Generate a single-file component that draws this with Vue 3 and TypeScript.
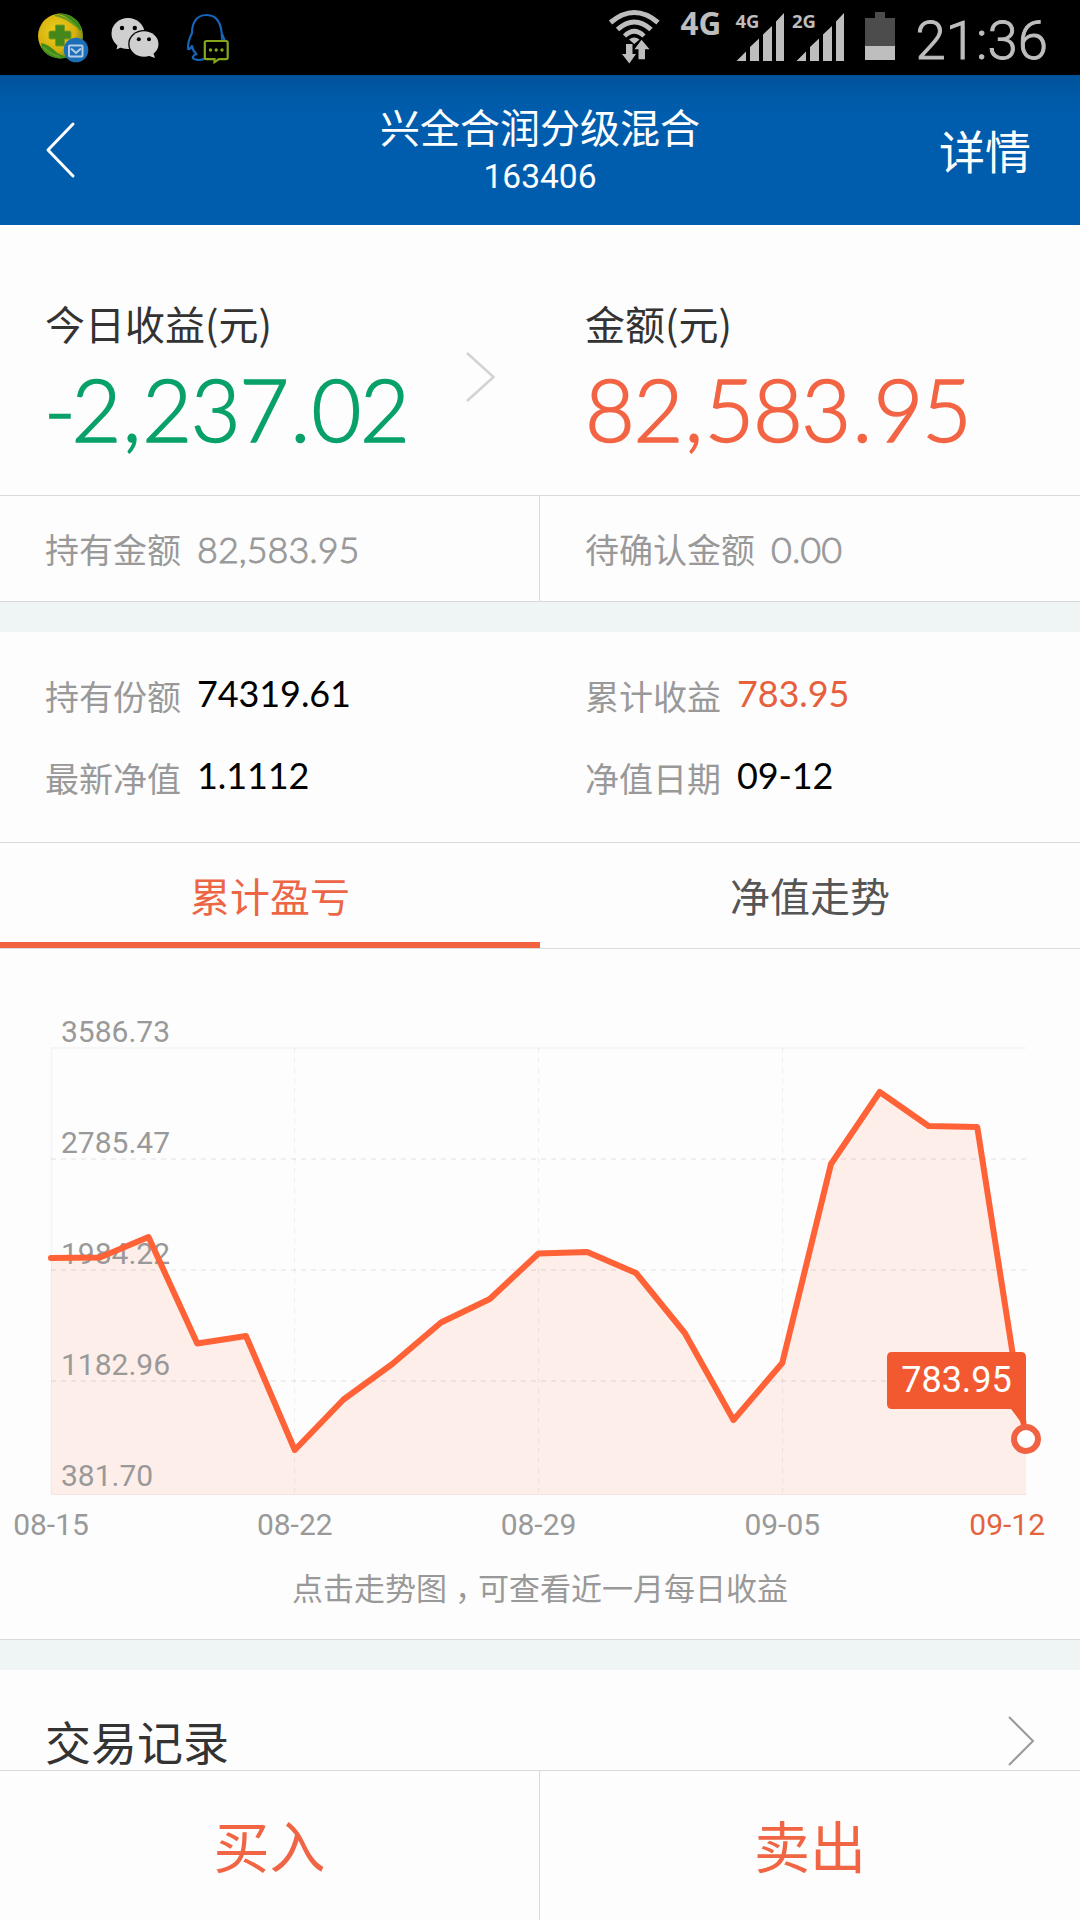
<script setup lang="ts">
interface Item {
  label: string
  value: string
  accent?: boolean
}

const holdings: Item[] = [
  { label: '持有份额', value: '74319.61' },
  { label: '累计收益', value: '783.95', accent: true },
  { label: '最新净值', value: '1.1112' },
  { label: '净值日期', value: '09-12' },
]

// Chart geometry, in chart viewBox units
const left = 51
const step = 48.75
const top = 48
const bottom = 495
const ys: number[] = [
  258, 257.5, 237, 343.5, 336, 450, 399.5, 364, 322.5, 299, 253.5, 252, 273,
  333, 420, 363, 164, 92, 126, 127, 439,
]
const points = ys.map((y, i) => `${left + i * step},${y}`).join(' ')
const area = `${left},${bottom} ${points} 1026,${bottom}`

const yLabels = ['3586.73', '2785.47', '1984.22', '1182.96', '381.70'].map(
  (text, i) => ({ text, y: top - 6 + i * 111 }),
)
const xLabels = [
  { text: '08-15', x: 51 },
  { text: '08-22', x: 294.75 },
  { text: '08-29', x: 538.5 },
  { text: '09-05', x: 782.25 },
]
</script>

<template>
  <div class="screen">
    <div class="status">
      <svg class="notices" width="240" height="75" viewBox="0 0 240 75">
        <defs>
          <radialGradient id="ball" cx="0.4" cy="0.4" r="0.65">
            <stop offset="0" stop-color="#ecd21c" />
            <stop offset="0.65" stop-color="#d8b00f" />
            <stop offset="1" stop-color="#6d8a16" />
          </radialGradient>
          <clipPath id="ballClip"><circle cx="60.5" cy="36" r="22.5" /></clipPath>
        </defs>
        <circle cx="60.5" cy="36" r="22.5" fill="url(#ball)" />
        <g clip-path="url(#ballClip)">
          <path d="M50 14Q62 12 71 21Q78 28 80 31L86 24L70 8Z" fill="#3d8c1a" />
          <path d="M41 43Q47 44 53 49Q60 57 72 57L64 62L44 58Z" fill="#3d8c1a" />
          <path d="M55 15Q66 17 76 26" fill="none" stroke="#5f9c24" stroke-width="2" />
          <path d="M43 47Q50 54 60 57" fill="none" stroke="#5f9c24" stroke-width="2" />
        </g>
        <path d="M56.500 25h7q1 0 1 1v5h5q1.500 0 1.500 1.500v5q0 1.500-1.500 1.500h-5v6q0 1-1 1h-7q-1 0-1-1v-6h-5q-1.500 0-1.500-1.500v-5q0-1.500 1.500-1.500h5v-5q0-1 1-1z" fill="#44881c" stroke="#7f9a1b" stroke-width="1" />
        <circle cx="76" cy="50" r="12.300" fill="#1b6fb8" />
        <rect x="69" y="45.500" width="13.500" height="11" rx="1" fill="none" stroke="#b4cde4" stroke-width="2" />
        <path d="M71 48.500l5 4.500l5-4.500" fill="none" stroke="#b4cde4" stroke-width="2" />

        <ellipse cx="128" cy="33.500" rx="16.500" ry="15.500" fill="#cfcfcf" />
        <path d="M118 43L116.500 49.500L124 46Z" fill="#cfcfcf" />
        <ellipse cx="144" cy="44" rx="15.800" ry="14" fill="#000" />
        <ellipse cx="144" cy="44" rx="14.500" ry="12.700" fill="#cfcfcf" />
        <path d="M148 55.500L155 58L152.500 51Z" fill="#cfcfcf" />
        <g fill="#000">
          <circle cx="122" cy="28" r="2.200" /><circle cx="134.800" cy="28" r="2.200" />
          <circle cx="138.800" cy="39.300" r="2" /><circle cx="149" cy="39.300" r="2" />
        </g>

        <path
          d="M222 39C222 25 218 15 206.500 15C195 15 192 25 192 33C190 37 187.500 43 188 49C190 50 191 47 192 46C192.500 49 194 52 196.500 54C193 55 190.500 59 196 59.500C199 60.500 202 60 205 58.500M222 34L224.500 40"
          fill="none"
          stroke="#1565b8"
          stroke-width="2.200"
          stroke-linecap="round"
          stroke-linejoin="round"
        />
        <path d="M206.500 41h19.500q1.700 0 1.700 1.700v14.800q0 1.700-1.700 1.700h-7l-4.500 3v-3h-8q-1.700 0-1.700-1.700V42.700q0-1.700 1.700-1.700z" fill="#000" stroke="#86a71c" stroke-width="2.200" />
        <g fill="#86a71c">
          <circle cx="210.500" cy="50" r="1.700" /><circle cx="216.200" cy="50" r="1.700" /><circle cx="222" cy="50" r="1.700" />
        </g>
      </svg>
      <svg class="system" width="480" height="75" viewBox="600 0 480 75">
        <g fill="none" stroke="#bebebe">
          <path d="M610.500 22.500Q634.300 2.500 658 22.500" stroke-width="5" />
          <path d="M617.500 29.500Q634.300 14.500 651 29.500" stroke-width="5" />
          <path d="M624.500 36Q634.300 26.500 644 36" stroke-width="4.500" />
        </g>
        <g fill="#bebebe">
          <path d="M629 39.500Q634.300 35.500 639.500 39.500L634.300 44Z" />
          <path d="M626 44h6.500v10h3.500l-6.700 9.500l-7.300-9.500h4z" />
          <path d="M638.500 59.300v-10h-4l7-9.600l8 9.600H645v10z" />
          <g v-for="dx in [0, 60]" :key="dx" :transform="`translate(${dx} 0)`">
            <path d="M736.500 61L746 51.500V61zM750 61V47l9-8.500V61zM763 61V34.500l9-8.500V61zM776 61V21.500l8-8.500V61z" />
          </g>
          <text class="net" x="680.500" y="34.800" font-size="31.500">4G</text>
          <text class="net" x="735.500" y="28.300" font-size="18.500">4G</text>
          <text class="net" x="792" y="28.300" font-size="18.500">2G</text>
        </g>
        <path d="M865 18h10v-6h10v6h10v28h-30z" fill="#4c4c4c" />
        <path d="M865 46h30v14h-30z" fill="#bebebe" />
        <text class="clock" x="915.500" y="59">21:36</text>
      </svg>
    </div>

    <header class="header">
      <svg class="back" width="34" height="60" viewBox="0 0 34 60">
        <path d="M28 4L3 30L28 56" fill="none" stroke="#fff" stroke-width="3" stroke-linecap="round" stroke-linejoin="round" />
      </svg>
      <div class="heading">
        <div class="title">兴全合润分级混合</div>
        <div class="code">163406</div>
      </div>
      <div class="detail">详情</div>
    </header>

    <section class="summary">
      <div class="figure">
        <div class="caption">今日收益(元)</div>
        <div class="big green"><span class="minus">-</span>2<span class="sep">,</span>237<span class="sep">.</span>02</div>
        <svg class="more" width="32" height="52" viewBox="0 0 32 52">
          <path d="M2 2L28.500 26L2 50" fill="none" stroke="#d2d3d6" stroke-width="2.600" />
        </svg>
      </div>
      <div class="figure">
        <div class="caption">金额(元)</div>
        <div class="big orange">82<span class="sep">,</span>583<span class="sep">.</span>95</div>
      </div>
    </section>

    <section class="split">
      <div class="cell"><span class="label">持有金额</span><span class="num thin">82,583.95</span></div>
      <div class="cell"><span class="label">待确认金额</span><span class="num thin">0.00</span></div>
    </section>
    <div class="band"></div>

    <section class="holdings">
      <div v-for="item in holdings" :key="item.label" class="holding">
        <span class="label">{{ item.label }}</span>
        <span class="num" :class="{ accent: item.accent }">{{ item.value }}</span>
      </div>
    </section>

    <nav class="tabs">
      <div class="tab active">累计盈亏</div>
      <div class="tab">净值走势</div>
    </nav>

    <section class="trend">
      <svg width="1080" height="601" viewBox="0 -51 1080 601">
        <g fill="none" stroke="#f4f4f4">
          <path d="M51.500 495V48H1026" stroke-width="1.500" />
        </g>
        <polygon :points="area" fill="#feeeea" />
        <path d="M51.500 258V494.500H1026" fill="none" stroke="#f6e6e3" stroke-width="1" />
        <g fill="none" stroke="#000" stroke-opacity="0.055" stroke-dasharray="5 5">
          <path d="M51 159H1026M51 270H1026M51 381H1026" stroke-width="1.800" />
          <path d="M294.500 48V492M538.500 48V492M782.500 48V492" stroke-width="1.200" />
        </g>
        <text v-for="l in yLabels" :key="l.text" class="axis" x="61" :y="l.y">{{ l.text }}</text>
        <polyline :points="points" fill="none" stroke="#ff6236" stroke-width="6" stroke-linecap="round" stroke-linejoin="round" />
        <path d="M892 352H1021q5 0 5 5V429L1011 409H892q-5 0-5-5V357q0-5 5-5z" fill="#f35931" />
        <circle cx="1026" cy="439" r="12" fill="#fff" stroke="#f16242" stroke-width="6" />
        <text class="tip" x="956.500" y="392" text-anchor="middle">783.95</text>
        <text v-for="l in xLabels" :key="l.text" class="axis" :x="l.x" y="535" text-anchor="middle">{{ l.text }}</text>
        <text class="axis last" x="1045" y="535" text-anchor="end">09-12</text>
      </svg>
      <p class="hint">点击走势图<span class="comma">，</span>可查看近一月每日收益</p>
    </section>
    <div class="band low"></div>

    <section class="records">
      <span class="records-title">交易记录</span>
      <svg width="30" height="52" viewBox="0 0 30 52">
        <path d="M2 2L26 26L2 50" fill="none" stroke="#999" stroke-width="2" />
      </svg>
    </section>

    <footer class="actions">
      <div class="action">买入</div>
      <div class="action">卖出</div>
    </footer>
  </div>
</template>

<style>
body {
  background: #fdfdfd;
}
</style>

<style scoped>
.screen {
  width: 1080px;
  height: 1920px;
  overflow: hidden;
  display: flex;
  flex-direction: column;
  background: #fdfdfd;
  color: #333;
  font-family: 'Noto Sans CJK SC', sans-serif;
}
.screen > * {
  flex: none;
  box-sizing: border-box;
}
.status {
  height: 75px;
  background: #000;
  display: flex;
  justify-content: space-between;
}
.net {
  font-family: 'Open Sans', sans-serif;
  font-weight: 700;
}
.clock {
  font-family: Roboto, sans-serif;
  font-weight: 300;
  font-size: 54.500px;
  fill: #bebebe;
  stroke: #bebebe;
  stroke-width: 0.9px;
}
.header {
  height: 150px;
  display: grid;
  grid-template-columns: 200px 1fr 200px;
  align-items: center;
  color: #fff;
  background: linear-gradient(#00529a 0, #005aa8 22px, #005dae 44px);
}
.back {
  margin-left: 45px;
}
.heading {
  height: 150px;
  text-align: center;
}
.title {
  margin-top: 21px;
  font-size: 40px;
  line-height: 60px;
}
.code {
  font-family: Roboto, sans-serif;
  font-size: 33.500px;
  line-height: 40px;
  margin-top: 1px;
}
.detail {
  justify-self: end;
  margin: 0 49px 2px 0;
  font-size: 46px;
  line-height: 60px;
}
.summary {
  height: 271px;
  display: flex;
  border-bottom: 1px solid #d9dadc;
}
.figure {
  position: relative;
  width: 540px;
  box-sizing: border-box;
  padding: 68px 0 0 45px;
}
.caption {
  font-size: 40px;
  line-height: 60px;
}
.big {
  font-family: Lato, sans-serif;
  font-weight: 300;
  font-size: 86px;
  line-height: 100px;
  margin-top: 6px;
  letter-spacing: -1.4px;
  font-kerning: none;
  -webkit-text-stroke: 1.6px currentColor;
}
.sep {
  margin: 0 2.500px;
}
.minus {
  display: inline-block;
  margin: 0 -3px 0 -1px;
}
.green {
  color: #08a169;
}
.orange {
  color: #f26443;
}
.more {
  position: absolute;
  left: 465px;
  top: 126px;
}
.split {
  height: 106px;
  display: flex;
  border-bottom: 1px solid #d9dadc;
}
.cell {
  width: 540px;
  box-sizing: border-box;
  padding: 1px 0 0 45px;
  display: flex;
  align-items: center;
  color: #999;
}
.cell:first-child {
  border-right: 1px solid #d9dadc;
}
.label {
  font-size: 34px;
  line-height: 50px;
  color: #999;
}
.num {
  margin-left: 16px;
  font-family: Lato, sans-serif;
  font-size: 36px;
  line-height: 50px;
}
.thin {
  font-weight: 300;
  -webkit-text-stroke: 0.9px currentColor;
}
.band {
  height: 30px;
  background: #eff5f5;
}
.holdings {
  height: 211px;
  padding-top: 23px;
  display: grid;
  grid-template-columns: 540px 540px;
  grid-auto-rows: 82px;
  border-bottom: 1px solid #d9dadc;
}
.holding {
  padding-left: 45px;
  display: flex;
  align-items: center;
  color: #000;
}
.holding .num {
  position: relative;
  top: -3px;
  letter-spacing: -0.1px;
}
.holding .accent {
  color: #e6603e;
}
.tabs {
  height: 106px;
  display: flex;
  border-bottom: 1px solid #dcdcdc;
}
.tab {
  width: 540px;
  height: 105px;
  box-sizing: border-box;
  text-align: center;
  font-size: 40px;
  line-height: 104px;
  color: #555;
}
.active {
  color: #ec6545;
  border-bottom: 6px solid #f26241;
}
.trend {
  height: 691px;
  border-bottom: 1px solid #d9dadc;
}
.trend svg {
  display: block;
}
.axis {
  font-family: Roboto, sans-serif;
  font-size: 30px;
  fill: #999;
}
.last {
  fill: #e2643f;
}
.tip {
  font-family: Roboto, sans-serif;
  font-size: 36px;
  fill: #fff;
}
.hint {
  margin: 15px 0 0;
  text-align: center;
  font-size: 31px;
  line-height: 44px;
  color: #999;
}
.comma {
  display: inline-block;
  width: 31px;
  text-indent: 8px;
  text-align: left;
  white-space: nowrap;
  font-feature-settings: 'halt';
}
.records {
  height: 100px;
  display: flex;
  justify-content: space-between;
  padding: 45px 43px 0 45px;
}
.records-title {
  font-size: 46px;
  line-height: 50px;
}
.actions {
  height: 150px;
  display: flex;
  border-top: 1px solid #d9dadc;
}
.action {
  width: 540px;
  box-sizing: border-box;
  text-align: center;
  font-size: 56px;
  line-height: 145px;
  color: #f06543;
}
.action:first-child {
  border-right: 1px solid #d9dadc;
}
</style>
